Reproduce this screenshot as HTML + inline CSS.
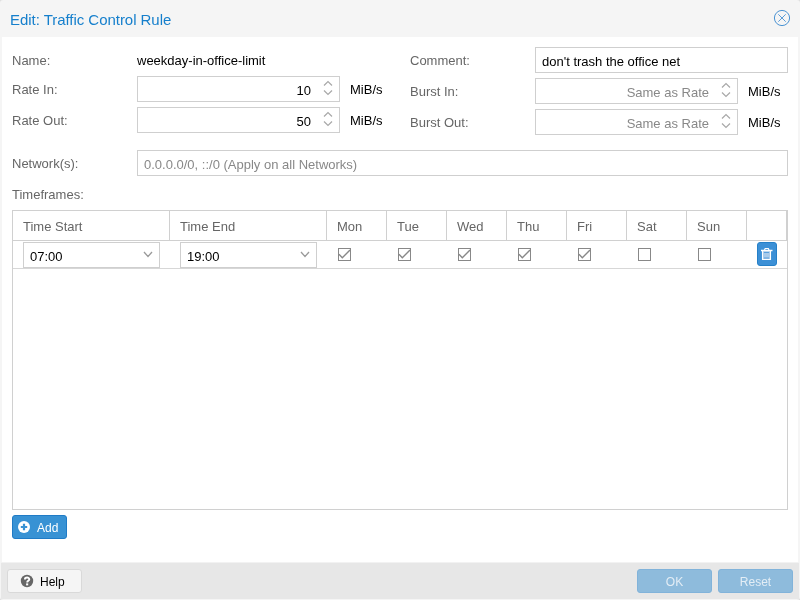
<!DOCTYPE html>
<html><head><meta charset="utf-8">
<style>
*{box-sizing:border-box;margin:0;padding:0}
html,body{width:800px;height:600px;overflow:hidden;background:#dedede;font-family:"Liberation Sans",sans-serif;font-size:13px;color:#000}
.a{position:absolute}
.t{position:absolute;white-space:nowrap;line-height:15px;will-change:transform}
.lbl{color:#666}
.fld{position:absolute;border:1px solid #cfcfcf;background:#fff;height:26px}
.spin{position:absolute;width:12px;height:17px}
.hdr{position:absolute;top:211px;height:29px;border-right:1px solid #d0d0d0;color:#666}
.cb{position:absolute;width:13px;height:13px;border:1px solid #888;background:#fff}
.btn{position:absolute;height:24px;border-radius:3px}
</style></head><body>
<!-- window -->
<div class="a" style="left:0;top:0;width:800px;height:600px;background:#f5f5f5;border-radius:3px"></div>
<div class="t" style="left:10px;top:11px;font-size:15px;line-height:17px;color:#157fcc;letter-spacing:-0.04px">Edit: Traffic Control Rule</div>
<svg class="a" style="left:773px;top:9px" width="18" height="18" viewBox="0 0 18 18"><circle cx="9" cy="9" r="7.6" fill="none" stroke="#4a93d3" stroke-width="1"/><path d="M5.3 5.3 L12.7 12.7 M12.7 5.3 L5.3 12.7" stroke="#5298d6" stroke-width="0.95"/></svg>
<!-- body -->
<div class="a" style="left:2px;top:37px;width:796px;height:526px;background:#fff"></div>

<!-- left column -->
<div class="t lbl" style="left:12px;top:53px">Name:</div>
<div class="t" style="left:137px;top:53px">weekday-in-office-limit</div>

<div class="t lbl" style="left:12px;top:82px">Rate In:</div>
<div class="fld" style="left:137px;top:76px;width:203px"></div>
<div class="t" style="left:240px;top:83px;width:71px;text-align:right">10</div>
<svg class="spin" style="left:322px;top:79px" width="12" height="17" viewBox="0 0 12 17"><path d="M2 6.5 L6 2.5 L10 6.5 M2 11.5 L6 15.5 L10 11.5" fill="none" stroke="#a8a8a8" stroke-width="1.2"/></svg>
<div class="t" style="left:350px;top:82px">MiB/s</div>

<div class="t lbl" style="left:12px;top:113px">Rate Out:</div>
<div class="fld" style="left:137px;top:107px;width:203px"></div>
<div class="t" style="left:240px;top:114px;width:71px;text-align:right">50</div>
<svg class="spin" style="left:322px;top:110px" width="12" height="17" viewBox="0 0 12 17"><path d="M2 6.5 L6 2.5 L10 6.5 M2 11.5 L6 15.5 L10 11.5" fill="none" stroke="#a8a8a8" stroke-width="1.2"/></svg>
<div class="t" style="left:350px;top:113px">MiB/s</div>

<!-- right column -->
<div class="t lbl" style="left:410px;top:53px">Comment:</div>
<div class="fld" style="left:535px;top:47px;width:253px"></div>
<div class="t" style="left:542px;top:54px">don't trash the office net</div>

<div class="t lbl" style="left:410px;top:84px">Burst In:</div>
<div class="fld" style="left:535px;top:78px;width:203px"></div>
<div class="t" style="left:600px;top:85px;width:109px;text-align:right;color:#888">Same as Rate</div>
<svg class="spin" style="left:720px;top:81px" width="12" height="17" viewBox="0 0 12 17"><path d="M2 6.5 L6 2.5 L10 6.5 M2 11.5 L6 15.5 L10 11.5" fill="none" stroke="#a8a8a8" stroke-width="1.2"/></svg>
<div class="t" style="left:748px;top:84px">MiB/s</div>

<div class="t lbl" style="left:410px;top:115px">Burst Out:</div>
<div class="fld" style="left:535px;top:109px;width:203px"></div>
<div class="t" style="left:600px;top:116px;width:109px;text-align:right;color:#888">Same as Rate</div>
<svg class="spin" style="left:720px;top:112px" width="12" height="17" viewBox="0 0 12 17"><path d="M2 6.5 L6 2.5 L10 6.5 M2 11.5 L6 15.5 L10 11.5" fill="none" stroke="#a8a8a8" stroke-width="1.2"/></svg>
<div class="t" style="left:748px;top:115px">MiB/s</div>

<!-- network -->
<div class="t lbl" style="left:12px;top:156px">Network(s):</div>
<div class="fld" style="left:137px;top:150px;width:651px"></div>
<div class="t" style="left:144px;top:157px;color:#888">0.0.0.0/0, ::/0 (Apply on all Networks)</div>

<div class="t lbl" style="left:12px;top:187px">Timeframes:</div>

<!-- grid -->
<div class="a" style="left:12px;top:210px;width:776px;height:300px;border:1px solid #d0d0d0;background:#fff"></div>
<div class="a" style="left:13px;top:240px;width:774px;height:1px;background:#d0d0d0"></div>
<div class="a" style="left:13px;top:268px;width:774px;height:1px;background:#d7d7d7"></div>
<div class="hdr" style="left:13px;width:157px"><span class="t" style="left:10px;top:8px">Time Start</span></div>
<div class="hdr" style="left:170px;width:157px"><span class="t" style="left:10px;top:8px">Time End</span></div>
<div class="hdr" style="left:327px;width:60px"><span class="t" style="left:10px;top:8px">Mon</span></div>
<div class="hdr" style="left:387px;width:60px"><span class="t" style="left:10px;top:8px">Tue</span></div>
<div class="hdr" style="left:447px;width:60px"><span class="t" style="left:10px;top:8px">Wed</span></div>
<div class="hdr" style="left:507px;width:60px"><span class="t" style="left:10px;top:8px">Thu</span></div>
<div class="hdr" style="left:567px;width:60px"><span class="t" style="left:10px;top:8px">Fri</span></div>
<div class="hdr" style="left:627px;width:60px"><span class="t" style="left:10px;top:8px">Sat</span></div>
<div class="hdr" style="left:687px;width:60px"><span class="t" style="left:10px;top:8px">Sun</span></div>
<div class="hdr" style="left:747px;width:40px"></div>

<!-- row -->
<div class="fld" style="left:23px;top:242px;width:137px"></div>
<div class="t" style="left:30px;top:249px">07:00</div>
<svg class="a" style="left:141px;top:249px" width="14" height="10" viewBox="0 0 14 10"><path d="M3 3 L7 7.5 L11 3" fill="none" stroke="#9a9a9a" stroke-width="1.3"/></svg>
<div class="fld" style="left:180px;top:242px;width:137px"></div>
<div class="t" style="left:187px;top:249px">19:00</div>
<svg class="a" style="left:298px;top:249px" width="14" height="10" viewBox="0 0 14 10"><path d="M3 3 L7 7.5 L11 3" fill="none" stroke="#9a9a9a" stroke-width="1.3"/></svg>

<svg class="a" style="left:338px;top:248px" width="13" height="13" viewBox="0 0 13 13"><rect x="0.5" y="0.5" width="12" height="12" fill="#fff" stroke="#888"/><path d="M1 6.3 L4.3 9.8 L12 2" fill="none" stroke="#888" stroke-width="1.4"/></svg>
<svg class="a" style="left:398px;top:248px" width="13" height="13" viewBox="0 0 13 13"><rect x="0.5" y="0.5" width="12" height="12" fill="#fff" stroke="#888"/><path d="M1 6.3 L4.3 9.8 L12 2" fill="none" stroke="#888" stroke-width="1.4"/></svg>
<svg class="a" style="left:458px;top:248px" width="13" height="13" viewBox="0 0 13 13"><rect x="0.5" y="0.5" width="12" height="12" fill="#fff" stroke="#888"/><path d="M1 6.3 L4.3 9.8 L12 2" fill="none" stroke="#888" stroke-width="1.4"/></svg>
<svg class="a" style="left:518px;top:248px" width="13" height="13" viewBox="0 0 13 13"><rect x="0.5" y="0.5" width="12" height="12" fill="#fff" stroke="#888"/><path d="M1 6.3 L4.3 9.8 L12 2" fill="none" stroke="#888" stroke-width="1.4"/></svg>
<svg class="a" style="left:578px;top:248px" width="13" height="13" viewBox="0 0 13 13"><rect x="0.5" y="0.5" width="12" height="12" fill="#fff" stroke="#888"/><path d="M1 6.3 L4.3 9.8 L12 2" fill="none" stroke="#888" stroke-width="1.4"/></svg>
<svg class="a" style="left:638px;top:248px" width="13" height="13" viewBox="0 0 13 13"><rect x="0.5" y="0.5" width="12" height="12" fill="#fff" stroke="#888"/></svg>
<svg class="a" style="left:698px;top:248px" width="13" height="13" viewBox="0 0 13 13"><rect x="0.5" y="0.5" width="12" height="12" fill="#fff" stroke="#888"/></svg>

<div class="btn" style="left:757px;top:242px;width:20px;background:#3c90d6;border:1px solid #2580c8"></div>
<svg class="a" style="left:757px;top:242px" width="20" height="24" viewBox="0 0 20 24"><rect x="5.5" y="9" width="8" height="8.5" fill="#a9cbea"/><path d="M5.5 9 V17.5 H13.5 V9" fill="none" stroke="#fff" stroke-width="1.1"/><path d="M4 8.5 H15.5" stroke="#fff" stroke-width="1.5"/><path d="M7.5 8 L8.2 6.5 H11.3 L12 8" fill="none" stroke="#fff" stroke-width="1.2"/><path d="M7 10.5 H12 M7 16 H12" stroke="#5a9fdc" stroke-width="1"/></svg>
<!-- add button -->
<div class="btn" style="left:12px;top:515px;width:55px;background:#3892d4;border:1px solid #1f7bc6"></div>
<svg class="a" style="left:17px;top:520px" width="14" height="14" viewBox="0 0 14 14"><circle cx="7" cy="7" r="6" fill="#fff"/><path d="M7 3.8 V10.2 M3.8 7 H10.2" stroke="#3892d4" stroke-width="2.2"/></svg>
<div class="t" style="left:37px;top:521px;color:#fff;font-size:12px">Add</div>
<!-- footer -->
<div class="a" style="left:1px;top:562px;width:798px;height:1px;background:#f2f2f2"></div>
<div class="a" style="left:1px;top:563px;width:798px;height:36px;background:#e7e7e7"></div>
<div class="btn" style="left:7px;top:569px;width:75px;background:#f5f5f5;border:1px solid #d9d9d9"></div>
<svg class="a" style="left:20px;top:574px" width="14" height="14" viewBox="0 0 14 14"><circle cx="7" cy="7" r="6.2" fill="#666"/><path d="M4.9 5.4 C4.9 2.9 9.3 2.9 9.3 5.3 C9.3 6.8 7.2 6.9 7.2 8.4" fill="none" stroke="#fff" stroke-width="1.9"/><rect x="6.1" y="9.4" width="2.1" height="2" fill="#fff"/></svg>
<div class="t" style="left:40px;top:575px;color:#000;font-size:12px">Help</div>

<div class="btn" style="left:637px;top:569px;width:75px;background:#8ebbdc;border:1px solid #81b3da"></div>
<div class="t" style="left:637px;top:575px;width:75px;text-align:center;color:#e3edf5;font-size:12px">OK</div>
<div class="btn" style="left:718px;top:569px;width:75px;background:#8ebbdc;border:1px solid #81b3da"></div>
<div class="t" style="left:718px;top:575px;width:75px;text-align:center;color:#e3edf5;font-size:12px">Reset</div>
</body></html>
